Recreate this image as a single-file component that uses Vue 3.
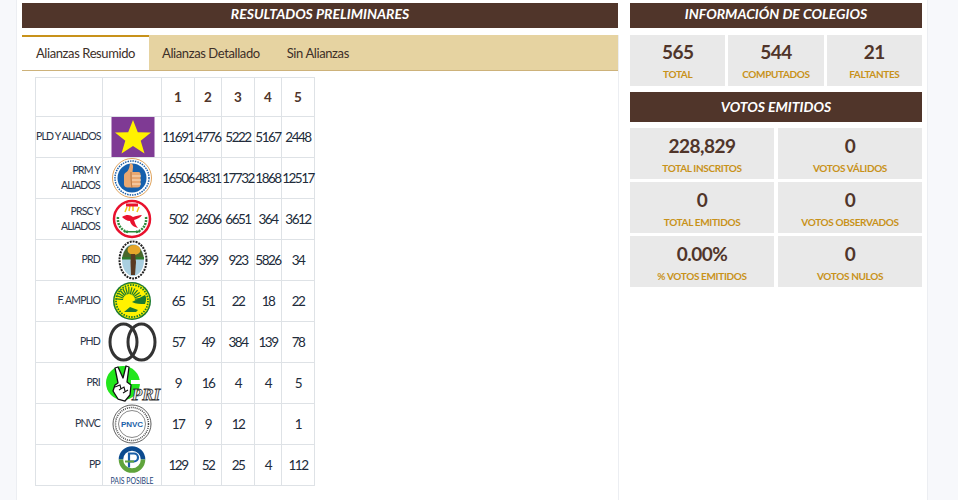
<script setup>
// Resultados preliminares por partido
const parties = [
  { name: 'PLD Y ALIADOS', logo: 'pld', votes: [11691, 4776, 5222, 5167, 2448] },
  { name: 'PRM Y\nALIADOS', logo: 'prm', votes: [16506, 4831, 17732, 1868, 12517] },
  { name: 'PRSC Y\nALIADOS', logo: 'prsc', votes: [502, 2606, 6651, 364, 3612] },
  { name: 'PRD', logo: 'prd', votes: [7442, 399, 923, 5826, 34] },
  { name: 'F. AMPLIO', logo: 'fa', votes: [65, 51, 22, 18, 22] },
  { name: 'PHD', logo: 'phd', votes: [57, 49, 384, 139, 78] },
  { name: 'PRI', logo: 'pri', votes: [9, 16, 4, 4, 5] },
  { name: 'PNVC', logo: 'pnvc', votes: [17, 9, 12, '', 1] },
  { name: 'PP', logo: 'pp', votes: [129, 52, 25, 4, 112] }
]

const tabs = ['Alianzas Resumido', 'Alianzas Detallado', 'Sin Alianzas']

const colegios = [
  { value: '565', label: 'TOTAL' },
  { value: '544', label: 'COMPUTADOS' },
  { value: '21', label: 'FALTANTES' }
]

const votos = [
  { value: '228,829', label: 'TOTAL INSCRITOS' },
  { value: '0', label: 'VOTOS VÁLIDOS' },
  { value: '0', label: 'TOTAL EMITIDOS' },
  { value: '0', label: 'VOTOS OBSERVADOS' },
  { value: '0.00%', label: '% VOTOS EMITIDOS' },
  { value: '0', label: 'VOTOS NULOS' }
]

// rayos del sol del logo de Frente Amplio
const rays = Array.from({ length: 13 }, (_, i) => -175 + i * 14)
</script>

<template>
  <div class="page">
    <div class="content">
      <section class="left">
        <h2 class="bar bar-left">RESULTADOS PRELIMINARES</h2>
        <div class="card">
          <div class="tabs">
            <div v-for="(tab, i) in tabs" :key="tab" class="tab" :class="{ active: i === 0 }">{{ tab }}</div>
          </div>
          <table class="results">
            <colgroup>
              <col style="width: 67px" />
              <col style="width: 59px" />
              <col style="width: 33px" />
              <col style="width: 27px" />
              <col style="width: 33px" />
              <col style="width: 27px" />
              <col style="width: 33px" />
            </colgroup>
            <thead>
              <tr>
                <th></th>
                <th></th>
                <th v-for="n in 5" :key="n">{{ n }}</th>
              </tr>
            </thead>
            <tbody>
              <tr v-for="party in parties" :key="party.name">
                <td class="name">{{ party.name }}</td>
                <td class="logo">
                  <svg width="58" height="40" viewBox="0 0 58 40">
                    <g v-if="party.logo === 'pld'">
                      <rect x="8.500" y="0" width="43" height="40" fill="#7f3a94" />
                      <polygon points="30,3 34.800,15.300 48,15.600 37.700,23.700 41.500,36.500 30,29 18.500,36.500 22.300,23.700 12,15.600 25.200,15.300" fill="#fff200" />
                    </g>
                    <g v-else-if="party.logo === 'prm'">
                      <circle cx="29" cy="20" r="19.500" fill="#fff" stroke="#e0a35c" stroke-width="1" />
                      <circle cx="29" cy="20" r="17" fill="none" stroke="#1c5fa8" stroke-width="1.500" stroke-dasharray="1.500 1" />
                      <circle cx="29" cy="20" r="14.500" fill="#1560ad" />
                      <path d="M27 5.500c2.500-.5 3.500 1.500 3 4l-.5 4.500h6c1.500 0 2 1 2 2.500v10c0 2-1 3-3 3h-10c-2 0-3.500-1-3.500-3v-9c0-1.500 1-2.500 2.500-3.500 2-1.500 3-4 3.500-9z" fill="#e9a871" />
                      <path d="M28 14c0 5 0 11 1 16" fill="none" stroke="#b87740" stroke-width="1" />
                      <path d="M29 18h9M29 22h9M29 26h9" stroke="#fbe3c8" stroke-width="1" />
                    </g>
                    <g v-else-if="party.logo === 'prsc'">
                      <circle cx="29" cy="20" r="18" fill="#fff" stroke="#e8112d" stroke-width="2.500" />
                      <path d="M15 18c-1 8 4 14 10 15M43 18c1 8-4 14-10 15" fill="none" stroke="#2c8a3a" stroke-width="2.500" stroke-dasharray="2 1" />
                      <path d="M22 13l2-5M26 12l1-5M30 12v-5M34 13l2-5" stroke="#f5c518" stroke-width="1.500" />
                      <path d="M19 18c5-3 8-2 11 0 3-1 6-2 9-2-2 3-5 4-8 5 1 3 2 6 4 8-4-1-7-3-8-7-3 0-6-2-8-4z" fill="#e8112d" />
                      <rect x="23" y="4.500" width="12" height="3" fill="#e8112d" />
                      <rect x="21" y="32" width="16" height="1.500" fill="#2c8a3a" />
                    </g>
                    <g v-else-if="party.logo === 'prd'">
                      <ellipse cx="30" cy="20" rx="13.500" ry="18.500" fill="#fff" stroke="#222" stroke-width="2" stroke-dasharray="2 1" />
                      <ellipse cx="30" cy="20" rx="11" ry="16" fill="#a9cfe0" />
                      <path d="M19.200 18a11 16 0 0 1 21.600 0z" fill="#49672b" />
                      <ellipse cx="31" cy="10" rx="6.500" ry="5" fill="#e5a62a" />
                      <rect x="19" y="17" width="22" height="2.500" fill="#2f7a2c" />
                      <path d="M28 14h4l1 8-1 13h-4l-.5-13z" fill="#5a3a22" />
                    </g>
                    <g v-else-if="party.logo === 'fa'">
                      <circle cx="29" cy="20" r="19" fill="#1b7a2f" />
                      <circle cx="29" cy="20" r="17.500" fill="#fff200" />
                      <circle cx="29" cy="20" r="16" fill="none" stroke="#1b7a2f" stroke-width="1.800" stroke-dasharray="1.500 1.200" />
                      <g stroke="#1b7a2f" stroke-width="1.200">
                        <line v-for="a in rays" :key="a" x1="29" y1="20" x2="42" y2="20" :transform="`translate(-3 -1) rotate(${a} 29 20)`" />
                      </g>
                      <circle cx="26" cy="19" r="6" fill="#fff200" />
                      <path d="M29 21l13-7c1.500 2 1.500 5 0 9-5 0-9 0-13-2zM21 31l6-5 8 3-2 2z" fill="#1b7a2f" />
                    </g>
                    <g v-else-if="party.logo === 'phd'" fill="none" stroke="#333" stroke-width="3">
                      <ellipse cx="20.500" cy="20" rx="13.500" ry="18" />
                      <ellipse cx="38.500" cy="20" rx="13.500" ry="18" />
                    </g>
                    <g v-else-if="party.logo === 'pri'">
                      <circle cx="20" cy="20" r="17" fill="#22e61c" />
                      <rect x="28" y="17" width="12" height="4" fill="#fff" />
                      <path d="M15 20L12 5l3-1 5 11 3-12 3 1-2 15 4 3-1 10-5 6-7-2-5-8 2-6z" fill="#fff" stroke="#111" stroke-width="1.300" stroke-linejoin="round" />
                      <path d="M12 24l5-2 1 4M16 27l5-3 1 4M20 30l5-3" fill="none" stroke="#111" stroke-width="1.100" />
                      <text x="43" y="37" text-anchor="middle" class="pri-text">PRI</text>
                    </g>
                    <g v-else-if="party.logo === 'pnvc'">
                      <circle cx="29" cy="20" r="19" fill="#fff" stroke="#333" stroke-width=".8" />
                      <circle cx="29" cy="20" r="16.500" fill="none" stroke="#444" stroke-width="1.500" stroke-dasharray="1 1" />
                      <circle cx="29" cy="20" r="13.500" fill="none" stroke="#555" stroke-width=".7" />
                      <text x="29" y="23" text-anchor="middle" class="pnvc-text">PNVC</text>
                    </g>
                    <g v-else-if="party.logo === 'pp'">
                      <circle cx="29" cy="14.500" r="11" fill="#fff" />
                      <path d="M15.700 14.500a13.300 13.300 0 0 1 26.600 0h-4.500a8.800 8.800 0 0 0-17.600 0z" fill="#0b4a8f" />
                      <path d="M15.700 14.500a13.300 13.300 0 0 0 26.600 0h-4.500a8.800 8.800 0 0 1-17.600 0z" fill="#5fa43c" />
                      <path d="M26 22.500v-14h5a4 4 0 0 1 0 8h-5" fill="none" stroke="#1a5fa8" stroke-width="2.200" />
                      <path d="M22 16.500h9" stroke="#5fa43c" stroke-width="2" />
                      <text x="29" y="38.500" text-anchor="middle" textLength="43" lengthAdjust="spacingAndGlyphs" class="pp-text">PAIS POSIBLE</text>
                    </g>
                  </svg>
                </td>
                <td v-for="(v, i) in party.votes" :key="i">{{ v }}</td>
              </tr>
            </tbody>
          </table>
        </div>
      </section>

      <aside class="right">
        <h2 class="bar">INFORMACIÓN DE COLEGIOS</h2>
        <div class="tiles three">
          <div v-for="t in colegios" :key="t.label" class="tile">
            <div class="value">{{ t.value }}</div>
            <div class="label">{{ t.label }}</div>
          </div>
        </div>
        <h2 class="bar bar-tall">VOTOS EMITIDOS</h2>
        <div class="tiles two">
          <div v-for="t in votos" :key="t.label" class="tile">
            <div class="value">{{ t.value }}</div>
            <div class="label">{{ t.label }}</div>
          </div>
        </div>
      </aside>
    </div>
  </div>
</template>

<style>
html, body {
  background: #f7f8fb;
}
</style>

<style scoped>
.page {
  height: 500px;
  overflow: hidden;
  padding-left: 16px;
  box-sizing: border-box;
  font-family: Lato, "Noto Sans", sans-serif;
  color: #212b3a;
}

.content {
  display: flex;
  gap: 11px;
  width: 912px;
  height: 500px;
  padding: 3px 5px 0;
  box-sizing: border-box;
  background: #fff;
  border-left: 1px solid #eceef2;
  border-right: 1px solid #eceef2;
}

.left {
  width: 597px;
  flex: none;
}

.right {
  width: 292px;
  flex: none;
}

.bar {
  margin: 0;
  height: 25px;
  line-height: 22px;
  background: #50352a;
  color: #fff;
  font-size: 14px;
  font-style: italic;
  font-weight: 700;
  text-align: center;
}

.bar-left {
  margin-right: 1px;
}

.bar-tall {
  height: 30px;
  line-height: 30px;
  margin-top: 6px;
}

.card {
  margin-top: 7px;
  height: 470px;
  box-sizing: border-box;
  border-right: 1px solid #eceef2;
}

.tabs {
  display: flex;
  height: 36px;
  box-sizing: border-box;
  background: #e6d3a1;
  border-bottom: 1px solid #cdb27a;
}

.tab {
  padding: 0 14px 0 13px;
  line-height: 36px;
  font-size: 13px;
  letter-spacing: -.4px;
  white-space: nowrap;
  color: #3d2f28;
}

.tab.active {
  width: 127px;
  box-sizing: border-box;
  height: 35px;
  line-height: 33px;
  background: #fff;
  border-top: 2px solid #c8921a;
  text-align: center;
  padding: 0;
}

.results {
  margin: 6px 0 0 13px;
  width: 280px;
  table-layout: fixed;
  border-collapse: collapse;
  font-size: 13.500px;
  letter-spacing: -1.500px;
}

.results th,
.results td {
  border: 1px solid #dee2e6;
  padding: 0;
  text-align: center;
  white-space: nowrap;
}

.results th {
  height: 38px;
  font-size: 13.500px;
  font-weight: 700;
  letter-spacing: 0;
  color: #50352a;
}

.results td {
  height: 40px;
}

.results td.name {
  white-space: pre;
  text-align: right;
  padding-right: 2px;
  font-size: 10.500px;
  letter-spacing: -.8px;
  line-height: 15.500px;
  color: #2b3448;
}

.results td.logo {
  line-height: 0;
}

.logo svg {
  display: block;
  overflow: visible;
}

.pri-text {
  font-family: "Liberation Serif", serif;
  font-size: 17px;
  font-weight: 700;
  font-style: italic;
  letter-spacing: 0;
  fill: #f2f2f2;
  stroke: #333;
  stroke-width: .8px;
}

.pnvc-text {
  font-family: "Liberation Sans", sans-serif;
  font-size: 8px;
  font-weight: 700;
  letter-spacing: 0;
  fill: #1c5fa8;
}

.pp-text {
  font-family: Lato, sans-serif;
  font-size: 8.500px;
  letter-spacing: 0;
  fill: #1d3f78;
}

.tiles {
  display: grid;
  margin-top: 7px;
}

.three {
  grid-template-columns: repeat(3, 1fr);
  column-gap: 3px;
}

.three .value {
  padding-top: 5px;
}

.two {
  margin-top: 6px;
  grid-template-columns: repeat(2, 1fr);
  gap: 3px 4px;
}

.tile {
  height: 51px;
  background: #e9e9e9;
  text-align: center;
}

.value {
  padding-top: 6px;
  line-height: 24px;
  font-size: 19px;
  letter-spacing: -.5px;
  font-weight: 700;
  color: #50352a;
}

.label {
  margin-top: 3px;
  font-size: 10px;
  letter-spacing: -.35px;
  line-height: 14px;
  font-weight: 700;
  color: #c8921a;
}
</style>
